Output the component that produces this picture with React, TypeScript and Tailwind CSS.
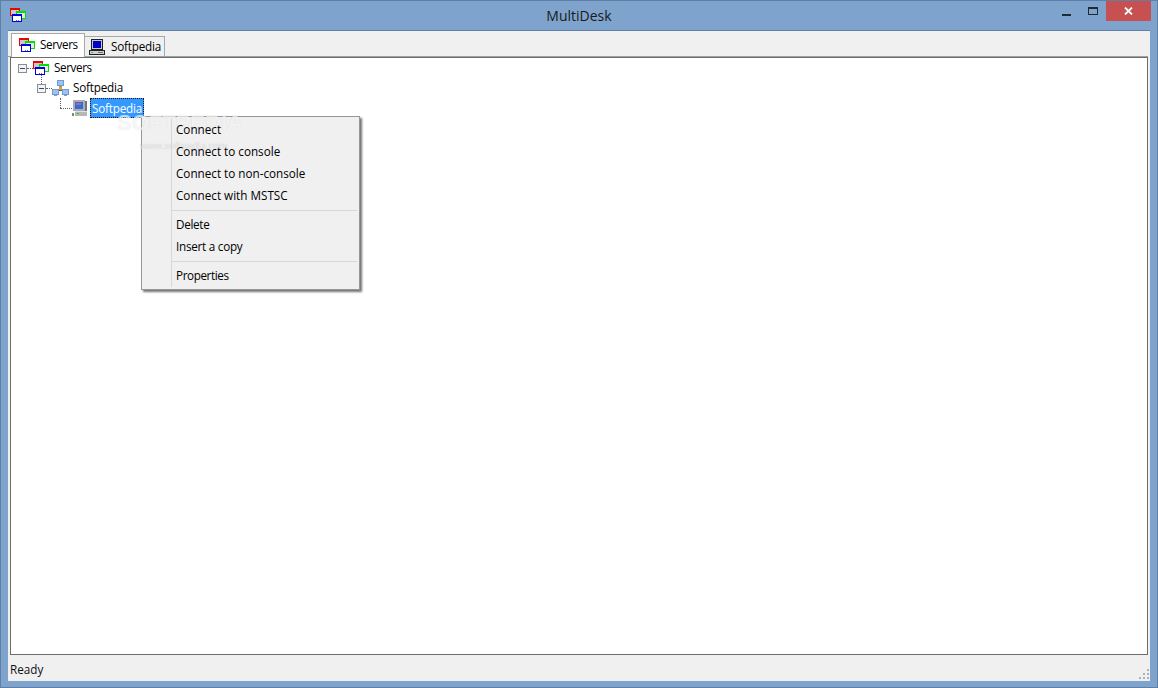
import React from 'react';

const font = { fontFamily: '"Open Sans", "Noto Sans", sans-serif' };

const ServersIcon = ({ className = '' }: { className?: string }) => (
  <svg width="16" height="14" viewBox="0 0 16 14" className={`shrink-0 ${className}`} shapeRendering="crispEdges">
    <rect x="0.5" y="0.5" width="9" height="7" fill="#c8c8c8" stroke="#f00000" />
    <rect x="1" y="1" width="8" height="1" fill="#f00000" />
    <rect x="6.5" y="3.5" width="9" height="7" fill="#e8e8e8" stroke="#00e000" />
    <rect x="7" y="4" width="8" height="1" fill="#00e000" />
    <rect x="2.5" y="6.5" width="9" height="7" fill="#ffffff" stroke="#0000e0" />
    <rect x="3" y="7" width="8" height="1" fill="#0000e0" />
    <rect x="6" y="12" width="1" height="1" fill="#6060a0" />
    <rect x="8" y="12" width="1" height="1" fill="#6060a0" />
  </svg>
);

const ComputerIcon = () => (
  <svg width="16" height="16" viewBox="0 0 16 16" className="shrink-0" shapeRendering="crispEdges">
    <rect x="2.500" y="0.500" width="11" height="10" fill="#c8c8c8" stroke="#202020" />
    <rect x="4" y="2" width="8" height="7" fill="#0000c8" />
    <rect x="0.500" y="11.500" width="15" height="4" fill="#d0d0d0" stroke="#202020" />
    <rect x="2" y="13" width="2" height="1" fill="#20d040" />
    <rect x="9" y="13" width="5" height="1" fill="#707070" />
  </svg>
);

const ServerIcon = () => (
  <svg width="16" height="16" viewBox="0 0 16 16" className="shrink-0" shapeRendering="crispEdges">
    <rect x="1" y="0" width="12" height="11" fill="#a4adb8" />
    <rect x="3" y="2" width="8" height="7" fill="#3a6ad0" />
    <rect x="4" y="3" width="5" height="2" fill="#a86a98" />
    <rect x="13" y="1" width="2" height="10" fill="#70767e" />
    <rect x="3" y="11" width="12" height="5" fill="#b4b8b4" />
    <rect x="3" y="11" width="12" height="1" fill="#e0e0e0" />
    <rect x="5" y="13" width="2" height="1" fill="#30c040" />
    <rect x="0" y="13" width="2" height="3" fill="#808880" />
  </svg>
);

const NetworkIcon = () => (
  <svg width="17" height="16" viewBox="0 0 17 16" className="shrink-0" shapeRendering="crispEdges">
    <path d="M8 5h1v3H8zM3 10h11v1H3z" fill="#6a5a30" />
    <rect x="5" y="0" width="7" height="6" fill="#6f9ad4" />
    <rect x="6" y="1" width="5" height="4" fill="#9cc4f2" />
    <rect x="7" y="6" width="3" height="1" fill="#9098a8" />
    <rect x="0" y="9" width="7" height="6" fill="#6f9ad4" />
    <rect x="1" y="10" width="5" height="4" fill="#9cc4f2" />
    <rect x="2" y="15" width="3" height="1" fill="#9098a8" />
    <rect x="10" y="9" width="7" height="6" fill="#6f9ad4" />
    <rect x="11" y="10" width="5" height="4" fill="#9cc4f2" />
    <rect x="12" y="15" width="3" height="1" fill="#9098a8" />
    <rect x="7" y="7" width="3" height="3" fill="#e0a020" />
  </svg>
);

const Expander = () => (
  <div className="w-[9px] h-[9px] border border-[#8c8c8c] bg-[#f4f4f4] flex items-center justify-center shrink-0">
    <div className="w-[5px] h-px bg-[#1f4f8f]" />
  </div>
);

const MenuItem = ({ label, className = '' }: { label: string; className?: string }) => (
  <div className={`relative h-[22px] flex items-center pl-[34px] text-[11.7px] text-black ${className}`}>{label}</div>
);

const MenuSep = () => <div className="relative h-px bg-[#d7d7d7] ml-[30px] mr-[2px] my-[3px]" />;

export default function App() {
  return (
    <div
      className="w-[1158px] h-[688px] bg-[#7ea3cd] border border-[#5f7fa6] flex flex-col overflow-hidden"
      style={font}
    >
      {/* title bar */}
      <div className="relative h-[29px] shrink-0 flex items-center justify-center">
        <ServersIcon className="absolute left-[9px] top-[7px]" />
        <span className="text-[14px] text-[#1a1a1a]">MultiDesk</span>
        <div className="absolute left-[1061px] top-[13px] w-[9px] h-[2px] bg-[#1f2a36]" />
        <div className="absolute left-[1087px] top-[6px] w-[10px] h-[8px] border border-[#1f2a36] border-t-2" />
        <div className="absolute left-[1105px] top-0 w-[45px] h-[20px] bg-[#c75050] flex items-center justify-center">
          <svg width="9" height="8" viewBox="0 0 9 8">
            <path d="M1 0.500 8 7.500M8 0.500 1 7.500" stroke="#fff" strokeWidth="1.800" />
          </svg>
        </div>
      </div>

      {/* client area */}
      <div className="mx-[7px] mb-[6px] flex-1 bg-[#f0f0f0] border-t border-[#5f7fa6] flex flex-col min-h-0">
        {/* tabs */}
        <div className="h-[26px] shrink-0 flex items-end pl-[3px] pr-[2px] border-b border-[#a0a0a0] mr-[2px]">
          <div className="relative z-10 h-[24px] w-[74px] -mb-px pb-[1px] bg-white border border-b-0 border-[#a8a8a8] flex items-center pl-[7px] gap-[5px] text-[11.7px] text-black">
            <ServersIcon />
            <span className="tracking-[-0.4px]">Servers</span>
          </div>
          <div className="h-[20px] w-[80px] bg-[#f0f0f0] border border-l-0 border-b-0 border-[#a8a8a8] flex items-center pl-[4px] gap-[6px] text-[11.7px] text-black">
            <ComputerIcon />
            <span className="tracking-[-0.2px]">Softpedia</span>
          </div>
        </div>

        {/* tree */}
        <div className="relative flex-1 ml-[2px] mr-[2px] bg-white border border-[#6d6d6d] text-[11.7px] text-black min-h-0">
          <div className="h-5 flex items-center pl-[7px]">
            <Expander />
            <div className="w-[6px] border-t border-dotted border-[#606060]" />
            <ServersIcon />
            <span className="ml-[5px] tracking-[-0.4px]">Servers</span>
          </div>
          <div className="relative h-5 flex items-center pl-[26px]">
            <div className="absolute left-[30px] top-[-3px] h-[9px] border-l border-dotted border-[#606060]" />
            <Expander />
            <div className="w-[6px] border-t border-dotted border-[#606060]" />
            <NetworkIcon />
            <span className="ml-[4px] tracking-[-0.2px]">Softpedia</span>
          </div>
          <div className="relative h-5 flex items-center pl-[49px]">
            <div className="absolute left-[49px] top-0 h-[10px] border-l border-dotted border-[#606060]" />
            <div className="w-[12px] border-t border-dotted border-[#606060]" />
            <ServerIcon />
            <span className="ml-[2px] h-5 leading-[18px] px-px tracking-[-0.2px] bg-[#3399ff] text-white border border-dotted border-[#1a1a1a]">Softpedia</span>
          </div>

          {/* context menu */}
          <div className="absolute left-[130px] top-[58px] w-[219px] h-[174px] bg-[#f0f0f0] border border-[#979797] shadow-[2px_2px_2px_rgba(0,0,0,0.55)] pt-[2px]">
            <div className="absolute left-[29px] top-[2px] bottom-[2px] w-px bg-[#d7d7d7]" />
            {/* watermark runs across the menu edge, under the item text */}
            <div
              className="absolute left-[-25px] top-[-5px] text-[22px] leading-none font-bold text-white/70 [text-shadow:0_0_1px_rgba(0,0,0,0.12)] whitespace-nowrap"
              style={{ fontFamily: '"Liberation Sans", sans-serif' }}
            >
              SOFTPEDIA
            </div>
            <div className="absolute left-[-2px] top-[24px] text-[9.500px] leading-none text-white/70 [text-shadow:0_0_1px_rgba(0,0,0,0.25)] whitespace-nowrap">
              www.softpedia.com
            </div>
            <MenuItem label="Connect" />
            <MenuItem label="Connect to console" />
            <MenuItem label="Connect to non-console" />
            <MenuItem label="Connect with MSTSC" />
            <MenuSep />
            <MenuItem label="Delete" className="tracking-[-0.3px]" />
            <MenuItem label="Insert a copy" className="tracking-[-0.25px]" />
            <MenuSep />
            <MenuItem label="Properties" className="tracking-[-0.4px]" />
          </div>
        </div>

        {/* status bar */}
        <div className="relative h-[26px] shrink-0 flex items-center pl-[2px] pt-[3px] text-[11.7px] text-[#111]">
          Ready
          <svg width="10" height="10" viewBox="0 0 10 10" className="absolute right-[1px] bottom-[2px]" shapeRendering="crispEdges">
            <rect x="8" y="0" width="2" height="2" fill="#b0b0b0" />
            <rect x="4" y="4" width="2" height="2" fill="#b0b0b0" />
            <rect x="8" y="4" width="2" height="2" fill="#b0b0b0" />
            <rect x="0" y="8" width="2" height="2" fill="#b0b0b0" />
            <rect x="4" y="8" width="2" height="2" fill="#b0b0b0" />
            <rect x="8" y="8" width="2" height="2" fill="#b0b0b0" />
          </svg>
        </div>
      </div>
    </div>
  );
}
